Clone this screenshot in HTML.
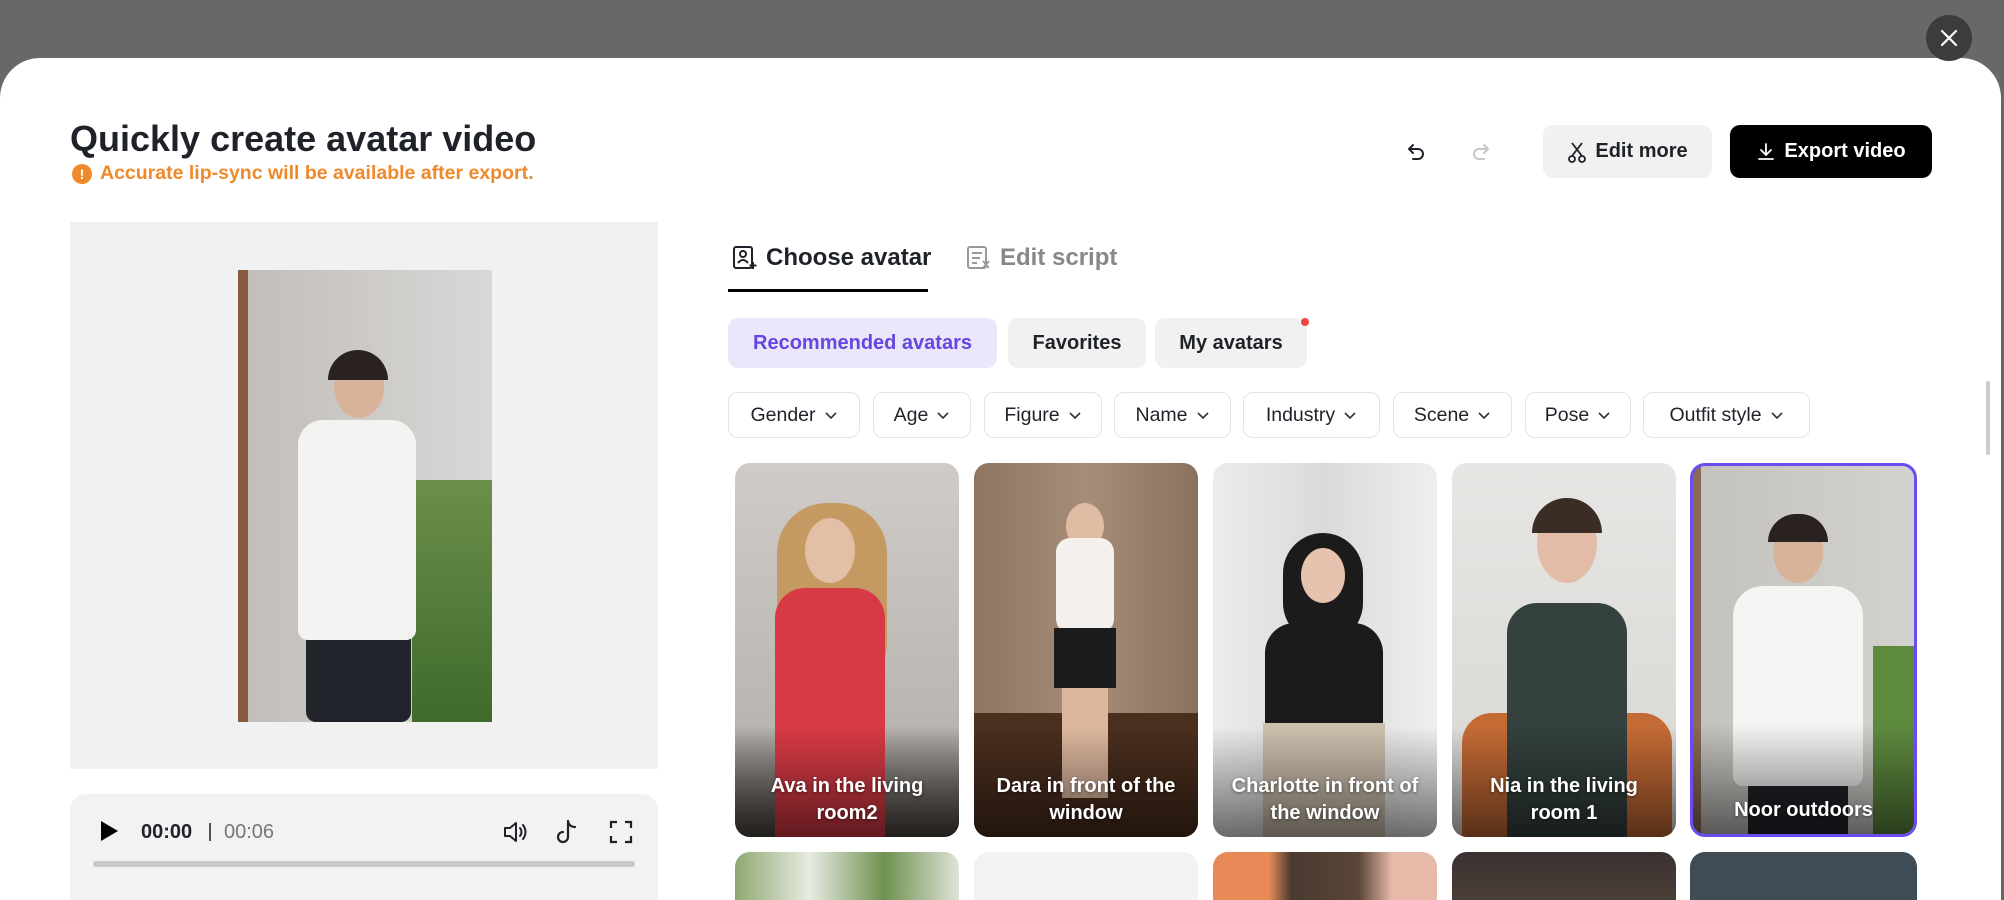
<!DOCTYPE html>
<html style="width:2004px;height:900px;overflow:hidden"><head><meta charset="utf-8"><style>
*{box-sizing:border-box;margin:0;padding:0}
body{width:2004px;height:900px;overflow:hidden;background:#686868;font-family:"Liberation Sans",sans-serif;position:relative}
.abs{position:absolute}
.modal{left:0;top:58px;width:2001px;height:842px;background:#fff;border-radius:40px 40px 0 0}
.close{left:1926px;top:15px;width:46px;height:46px;border-radius:50%;background:#3c3c3c}
.warn{left:72px;top:162px;font-size:19.5px;font-weight:700;color:#f0892c;display:flex;align-items:center;gap:8px}
.warn i{width:20px;height:20px;border-radius:50%;background:#f0892c;color:#fff;font-style:normal;font-size:14px;font-weight:700;display:flex;align-items:center;justify-content:center}
.btn{top:125px;height:53px;border-radius:10px;display:flex;align-items:center;justify-content:center;gap:8px;font-size:20px;font-weight:700}
.tab{top:244px;font-size:24px;font-weight:700;display:flex;align-items:center;gap:8px}
.pill{top:318px;height:50px;border-radius:10px;background:#f1f1f1;font-size:20px;font-weight:700;color:#1f2329;display:flex;align-items:center;justify-content:center}
.dd{top:392px;height:46px;border:1.5px solid #e3e3e3;border-radius:10px;font-size:19.5px;color:#1f2329;display:flex;align-items:center;justify-content:center;gap:8px}
.dd svg{width:14px;height:10px}
.card{width:224px;border-radius:15px;overflow:hidden}
.r1{top:463px;height:374px}
.r2{top:852px;height:48px;border-radius:15px 15px 0 0}
.lbl{position:absolute;left:0;right:0;bottom:10px;text-align:center;color:#fff;font-size:20px;font-weight:700;line-height:27px;padding:0 10px;text-shadow:0 1px 3px rgba(0,0,0,.5)}
.shade{position:absolute;left:0;right:0;bottom:0;height:110px;background:linear-gradient(transparent,rgba(0,0,0,.55))}
.fig{position:absolute}
</style></head><body>
<div class="abs modal"></div>
<div class="abs close"><svg width="46" height="46"><path d="M16 16L30 30M30 16L16 30" stroke="#fff" stroke-width="2.2" stroke-linecap="round"/></svg></div>
<div class="abs" style="left:1986px;top:381px;width:4px;height:74px;background:#ccc;border-radius:2px"></div>

<div class="abs" style="left:70px;top:118px;font-size:36px;font-weight:700;color:#1f2329">Quickly create avatar video</div>
<div class="abs warn"><i>!</i>Accurate lip-sync will be available after export.</div>

<svg class="abs" style="left:1405px;top:140px" width="24" height="24" viewBox="0 0 24 24"><path d="M8 5L4 9l4 4M4 9h9a5 5 0 010 10H8" fill="none" stroke="#1f2329" stroke-width="2" stroke-linecap="round" stroke-linejoin="round"/></svg>
<svg class="abs" style="left:1468px;top:140px" width="24" height="24" viewBox="0 0 24 24"><path d="M16 5l4 4-4 4M20 9h-9a5 5 0 000 10h5" fill="none" stroke="#c8c8c8" stroke-width="2" stroke-linecap="round" stroke-linejoin="round"/></svg>

<div class="abs btn" style="left:1543px;width:169px;background:#f1f1f1;color:#1f2329"><svg width="20" height="22" viewBox="0 0 20 22"><path d="M5 2l10 13M15 2L5 15" stroke="#1f2329" stroke-width="1.8" fill="none"/><circle cx="5" cy="18" r="3" fill="none" stroke="#1f2329" stroke-width="1.8"/><circle cx="15" cy="18" r="3" fill="none" stroke="#1f2329" stroke-width="1.8"/></svg>Edit more</div>
<div class="abs btn" style="left:1730px;width:202px;background:#000;color:#fff"><svg width="20" height="20" viewBox="0 0 20 20"><path d="M10 2v11M5 8l5 5 5-5M3 17h14" stroke="#fff" stroke-width="1.8" fill="none" stroke-linecap="round"/></svg>Export video</div>

<div class="abs" style="left:70px;top:222px;width:588px;height:547px;background:#f1f1f1"></div>
<div class="abs" style="left:238px;top:270px;width:254px;height:452px;background:linear-gradient(90deg,#8a5a3e 0,#8a5a3e 10px,#c2beb9 10px,#cfcdca 60%,#d8d8d8);overflow:hidden">
 <div class="fig" style="left:174px;top:210px;width:80px;height:242px;background:linear-gradient(#6c8f4a,#3e6a2c)"></div>
 <div class="fig" style="left:96px;top:86px;width:50px;height:62px;border-radius:50%;background:#d9b29a"></div>
 <div class="fig" style="left:90px;top:80px;width:60px;height:30px;border-radius:30px 30px 0 0;background:#2a2220"></div>
 <div class="fig" style="left:68px;top:335px;width:105px;height:117px;background:#22242c;border-radius:10px"></div>
 <div class="fig" style="left:60px;top:150px;width:118px;height:220px;background:#f3f3f1;border-radius:25px 25px 10px 10px"></div>
</div>

<div class="abs" style="left:70px;top:794px;width:588px;height:130px;background:#f2f2f2;border-radius:16px"></div>
<svg class="abs" style="left:99px;top:820px" width="20" height="22"><path d="M2 1L19 11 2 21z" fill="#000"/></svg>
<div class="abs" style="left:141px;top:821px;font-size:20px;font-weight:700;color:#1f2329">00:00</div>
<div class="abs" style="left:209px;top:823px;width:1.5px;height:18px;background:#555"></div>
<div class="abs" style="left:224px;top:821px;font-size:20px;color:#777">00:06</div>
<svg class="abs" style="left:502px;top:819px" width="26" height="26" viewBox="0 0 26 26"><path d="M3 9h5l6-5v18l-6-5H3z" fill="none" stroke="#1f2329" stroke-width="2" stroke-linejoin="round"/><path d="M18 9q3 4 0 8M21 6q5 7 0 14" fill="none" stroke="#1f2329" stroke-width="2" stroke-linecap="round"/></svg>
<svg class="abs" style="left:555px;top:818px" width="26" height="28" viewBox="0 0 26 28"><path d="M13 3v16a5 5 0 11-5-5M13 3q1 6 7 6" fill="none" stroke="#1f2329" stroke-width="2.2" stroke-linecap="round"/></svg>
<svg class="abs" style="left:608px;top:819px" width="26" height="26" viewBox="0 0 26 26"><path d="M3 9V3h6M17 3h6v6M23 17v6h-6M9 23H3v-6" fill="none" stroke="#1f2329" stroke-width="2.2"/></svg>
<div class="abs" style="left:93px;top:861px;width:542px;height:6px;background:#c8c8c8;border-radius:3px"></div>

<div class="abs tab" style="left:732px;color:#1f2329"><svg width="26" height="26" viewBox="0 0 26 26"><rect x="2" y="2" width="18" height="21" rx="2" fill="none" stroke="#1f2329" stroke-width="2"/><circle cx="11" cy="9" r="3" fill="none" stroke="#1f2329" stroke-width="2"/><path d="M6 18q5-6 10 0" fill="none" stroke="#1f2329" stroke-width="2"/><path d="M21 17v7M17.5 20.5h7" stroke="#1f2329" stroke-width="2"/></svg>Choose avatar</div>
<div class="abs" style="left:728px;top:289px;width:200px;height:3px;background:#000"></div>
<div class="abs tab" style="left:966px;color:#888"><svg width="26" height="26" viewBox="0 0 26 26"><rect x="2" y="2" width="18" height="21" rx="2" fill="none" stroke="#999" stroke-width="2"/><path d="M6 8h10M6 13h8M6 18h5" stroke="#999" stroke-width="2"/><path d="M17 16l6 7M23 16l-6 7" stroke="#999" stroke-width="1.8"/></svg>Edit script</div>

<div class="abs pill" style="left:728px;width:269px;background:#ebe7fb;color:#6645e0">Recommended avatars</div>
<div class="abs pill" style="left:1008px;width:138px">Favorites</div>
<div class="abs pill" style="left:1155px;width:152px">My avatars</div>
<div class="abs" style="left:1301px;top:318px;width:8px;height:8px;border-radius:50%;background:#f04545"></div>

<div class="abs dd" style="left:728px;width:132px">Gender<svg viewBox="0 0 14 10"><path d="M2 3l5 5 5-5" fill="none" stroke="#333" stroke-width="1.6"/></svg></div>
<div class="abs dd" style="left:873px;width:98px">Age<svg viewBox="0 0 14 10"><path d="M2 3l5 5 5-5" fill="none" stroke="#333" stroke-width="1.6"/></svg></div>
<div class="abs dd" style="left:984px;width:118px">Figure<svg viewBox="0 0 14 10"><path d="M2 3l5 5 5-5" fill="none" stroke="#333" stroke-width="1.6"/></svg></div>
<div class="abs dd" style="left:1114px;width:117px">Name<svg viewBox="0 0 14 10"><path d="M2 3l5 5 5-5" fill="none" stroke="#333" stroke-width="1.6"/></svg></div>
<div class="abs dd" style="left:1243px;width:137px">Industry<svg viewBox="0 0 14 10"><path d="M2 3l5 5 5-5" fill="none" stroke="#333" stroke-width="1.6"/></svg></div>
<div class="abs dd" style="left:1393px;width:119px">Scene<svg viewBox="0 0 14 10"><path d="M2 3l5 5 5-5" fill="none" stroke="#333" stroke-width="1.6"/></svg></div>
<div class="abs dd" style="left:1525px;width:106px">Pose<svg viewBox="0 0 14 10"><path d="M2 3l5 5 5-5" fill="none" stroke="#333" stroke-width="1.6"/></svg></div>
<div class="abs dd" style="left:1643px;width:167px">Outfit style<svg viewBox="0 0 14 10"><path d="M2 3l5 5 5-5" fill="none" stroke="#333" stroke-width="1.6"/></svg></div>

<div class="abs card r1" style="left:735px;background:linear-gradient(#cfcbc6,#b9b6b2 70%,#4a433d)">
 <div class="fig" style="left:42px;top:40px;width:110px;height:190px;border-radius:50px;background:#c59a62"></div>
 <div class="fig" style="left:70px;top:55px;width:50px;height:65px;border-radius:50%;background:#e3bfa5"></div>
 <div class="fig" style="left:40px;top:125px;width:110px;height:249px;border-radius:30px 30px 0 0;background:#d83a45"></div>
 <div class="shade"></div><div class="lbl">Ava in the living<br>room2</div></div>
<div class="abs card r1" style="left:974px;background:linear-gradient(90deg,#8d7562,#a58d78,#8a7260);">
 <div class="fig" style="left:0;top:250px;width:224px;height:124px;background:#4a2e1e"></div>
 <div class="fig" style="left:92px;top:40px;width:38px;height:46px;border-radius:50%;background:#e0bca4"></div>
 <div class="fig" style="left:82px;top:75px;width:58px;height:95px;border-radius:14px;background:#f3f0ee"></div>
 <div class="fig" style="left:80px;top:165px;width:62px;height:60px;background:#1c1c1c"></div>
 <div class="fig" style="left:88px;top:225px;width:46px;height:110px;background:#dcb79e"></div>
 <div class="shade"></div><div class="lbl">Dara in front of the<br>window</div></div>
<div class="abs card r1" style="left:1213px;background:linear-gradient(90deg,#ececec,#dadada 50%,#efefef)">
 <div class="fig" style="left:70px;top:70px;width:80px;height:110px;border-radius:40px;background:#1d1a1b"></div>
 <div class="fig" style="left:88px;top:85px;width:44px;height:55px;border-radius:50%;background:#e5c3ae"></div>
 <div class="fig" style="left:52px;top:160px;width:118px;height:110px;border-radius:30px 30px 10px 10px;background:#1c1a1c"></div>
 <div class="fig" style="left:50px;top:260px;width:122px;height:114px;background:#cdbfae"></div>
 <div class="shade"></div><div class="lbl">Charlotte in front of<br>the window</div></div>
<div class="abs card r1" style="left:1452px;background:linear-gradient(#e6e6e4,#d8d6d2)">
 <div class="fig" style="left:10px;top:250px;width:210px;height:124px;background:#c46a35;border-radius:30px 30px 0 0"></div>
 <div class="fig" style="left:85px;top:40px;width:60px;height:80px;border-radius:50%;background:#e2bca6"></div>
 <div class="fig" style="left:80px;top:35px;width:70px;height:35px;border-radius:35px 35px 0 0;background:#3b2c26"></div>
 <div class="fig" style="left:55px;top:140px;width:120px;height:234px;border-radius:30px 30px 0 0;background:#34413f"></div>
 <div class="shade"></div><div class="lbl">Nia in the living<br>room 1</div></div>
<div class="abs card r1" style="left:1690px;width:227px;border:3px solid #6a4cf0;background:linear-gradient(90deg,#8a6a55 0,#8a6a55 8px,#c4c2be 8px,#d3d2cf)">
 <div class="fig" style="left:180px;top:180px;width:47px;height:194px;background:#5e8a3e"></div>
 <div class="fig" style="left:80px;top:55px;width:50px;height:62px;border-radius:50%;background:#d9b29a"></div>
 <div class="fig" style="left:75px;top:48px;width:60px;height:28px;border-radius:30px 30px 0 0;background:#2a2220"></div>
 <div class="fig" style="left:55px;top:300px;width:100px;height:74px;background:#23242a"></div>
 <div class="fig" style="left:40px;top:120px;width:130px;height:200px;border-radius:30px 30px 10px 10px;background:#f4f4f2"></div>
 <div class="shade"></div><div class="lbl">Noor outdoors</div></div>

<div class="abs card r2" style="left:735px;background:linear-gradient(90deg,#8fa870,#e8ebe2,#6f9150,#dfe3d8)"></div>
<div class="abs card r2" style="left:974px;background:#f2f2f2"></div>
<div class="abs card r2" style="left:1213px;background:linear-gradient(90deg,#e88a58 0,#e88a58 25%,#4a3a30 35%,#5a4538 65%,#e6b9a8 80%)"></div>
<div class="abs card r2" style="left:1452px;background:linear-gradient(#3a3230,#4a3e38)"></div>
<div class="abs card r2" style="left:1690px;width:227px;background:#3f4c55"></div>
</body></html>
